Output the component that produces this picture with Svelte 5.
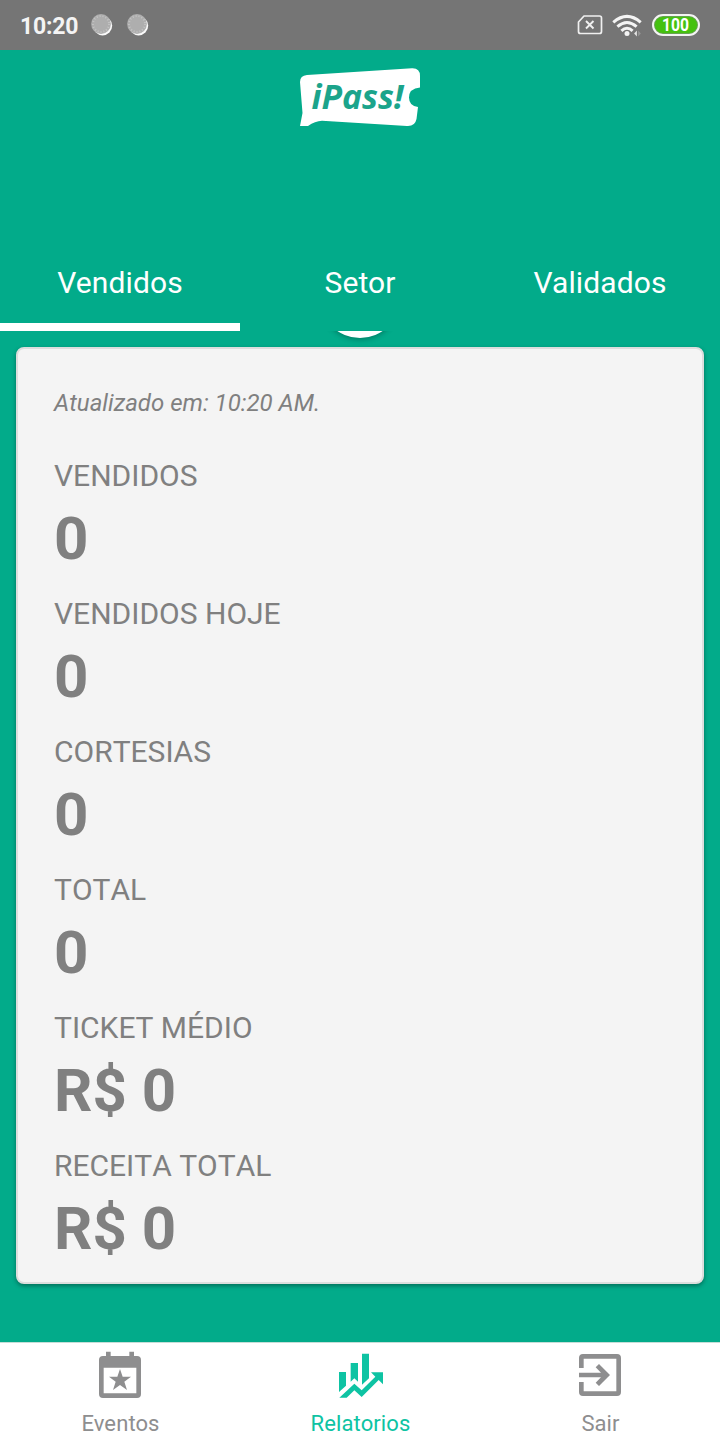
<script>
  const tabs = ['Vendidos', 'Setor', 'Validados'];
  let activeTab = 'Vendidos';

  const updatedAt = '10:20 AM';
  const stats = [
    { label: 'VENDIDOS', value: '0' },
    { label: 'VENDIDOS HOJE', value: '0' },
    { label: 'CORTESIAS', value: '0' },
    { label: 'TOTAL', value: '0' },
    { label: 'TICKET MÉDIO', value: 'R$ 0' },
    { label: 'RECEITA TOTAL', value: 'R$ 0' }
  ];

  const pages = [
    {
      name: 'Eventos',
      icon: 'M138 50h14v13h56V50h14v13h9q12 0 12 12v102q0 12-12 12H129q-12 0-12-12V75q0-12 12-12h9zM131 98v77h98V98zM180 102l8 23h25l-20 15 8 25-21-15-21 15 8-25-20-15h25z'
    },
    {
      name: 'Relatorios',
      icon: 'M117 111h21v41l-21 19zM152 84h22v56l-11-10-11 10zM186 56h21v74l-21 19zM118 188l45-42 22 20 41-41-13-13h36v36l-13-13-51 51-22-20-23 22z'
    },
    {
      name: 'Sair',
      icon: 'M167 97l10-10 33 33-33 33-10-10 16-16h-66v-14h66zM129 57h102q12 0 12 12v102q0 12-12 12H129q-12 0-12-12v-30h14v28h98V71h-98v28h-14V69q0-12 12-12z'
    }
  ];
  let activePage = 'Relatorios';
</script>

<div class="screen">
  <div class="status-bar">
    <span class="clock">10:20</span>
    {#each [1, 2] as n}
      <svg class="coin" width="24" height="24" viewBox="0 0 24 24">
        <circle cx="12.6" cy="12.8" r="9.6" fill="#fafafa" />
        <circle cx="11" cy="11" r="9.9" fill="#aeaeae" />
        <circle cx="11" cy="11" r="8" fill="none" stroke="#c4c4c4" stroke-width="2" stroke-dasharray="1 2" />
      </svg>
    {/each}
    <div class="system">
      <svg width="26" height="22" viewBox="0 0 26 22" fill="none" stroke="#f0f0f0">
        <path d="M7 2H22.5Q24.5 2 24.5 4V17.5Q24.5 19.5 22.5 19.5H3.5Q1.5 19.5 1.5 17.5V8Z" stroke-width="1.7" stroke-linejoin="round" />
        <path d="M9 7l7.5 7.5M16.5 7L9 14.5" stroke-width="1.9" />
      </svg>
      <svg class="wifi" width="30" height="24" viewBox="0 0 30 24" fill="none" stroke="#f4f4f4" stroke-width="3">
        <path d="M1.3 8.3Q15 -3.6 28.7 8.3" />
        <path d="M5.4 12.6Q15 4.4 24.6 12.6" />
        <path d="M9.4 16.8Q15 11.6 20.6 16.8" />
        <circle cx="15" cy="19.4" r="2.5" fill="#f4f4f4" stroke="none" />
        <path d="M24.9 16.5v6l-2.8-3z" fill="#e5e5e5" stroke="none" />
        <path d="M26.2 16.5v6l2.6-3z" fill="#969696" stroke="none" />
      </svg>
      <svg class="battery" width="48" height="22" viewBox="0 0 48 22">
        <rect x="1" y="1" width="46" height="20" rx="10" fill="#68a252" stroke="#f4f4f4" stroke-width="2" />
        <rect x="3" y="3" width="42" height="16" rx="8" fill="#45c110" />
        <text x="10" y="17.2" textLength="27" lengthAdjust="spacingAndGlyphs">100</text>
      </svg>
    </div>
  </div>

  <header>
    <svg class="logo" width="120" height="60" viewBox="0 0 120 60">
      <path
        fill="#fff"
        d="M7 7L112 .3Q120 0 120 8V19.500Q109 20.500 109 29.500Q109 38 118 39L116.500 51Q115 58.500 107 58L22 52.800Q15 53 8 58H0L2.500 45L0 14Q0 7.500 7 7Z"
      />
      <text x="11.500" y="40.500" textLength="92" lengthAdjust="spacingAndGlyphs">iPass!</text>
    </svg>
  </header>

  <nav class="tabs">
    {#each tabs as tab}
      <button class="tab" class:active={tab === activeTab} on:click={() => (activeTab = tab)}>{tab}</button>
    {/each}
  </nav>

  <main>
    <div class="refresh"><div class="spinner"></div></div>
    <section class="card">
      <p class="updated">Atualizado em: {updatedAt}.</p>
      {#each stats as stat}
        <div class="stat">
          <div class="label">{stat.label}</div>
          <div class="value">{stat.value}</div>
        </div>
      {/each}
    </section>
  </main>

  <nav class="bottom-nav">
    {#each pages as page}
      <button class="page" class:active={page.name === activePage} on:click={() => (activePage = page.name)}>
        <svg width="56" height="56" viewBox="96 36 168 168">
          <path d={page.icon} fill="currentColor" fill-rule="evenodd" />
        </svg>
        <span>{page.name}</span>
      </button>
    {/each}
  </nav>
</div>

<style>
  :global(body) {
    margin: 0;
  }

  .screen {
    display: flex;
    flex-direction: column;
    width: 720px;
    height: 1440px;
    overflow: hidden;
    background: #02ab8a;
    font-family: Roboto, sans-serif;
  }

  button {
    margin: 0;
    padding: 0;
    border: 0;
    background: none;
    font-family: inherit;
  }

  .status-bar {
    display: flex;
    align-items: center;
    box-sizing: border-box;
    height: 50px;
    padding: 0 20px;
    background: #757575;
    color: #f4f4f4;
  }

  .clock {
    width: 58px;
    margin-right: 12px;
    padding-top: 3px;
    font-size: 23px;
    font-weight: 700;
    line-height: 26px;
    letter-spacing: -0.2px;
  }

  .coin {
    margin-right: 12px;
  }

  .system {
    display: flex;
    align-items: center;
    margin-left: auto;
  }

  .wifi {
    margin: 2px 10px 0 9px;
  }

  .battery text {
    fill: #fff;
    font-size: 18px;
    font-weight: 700;
  }

  header {
    display: flex;
    justify-content: center;
    box-sizing: border-box;
    height: 185px;
    padding-top: 18px;
  }

  .logo text {
    fill: #1ba48b;
    font-family: 'Open Sans', sans-serif;
    font-size: 34px;
    font-style: italic;
    font-weight: 700;
  }

  .tabs {
    display: flex;
    height: 96px;
  }

  .tab {
    flex: 1;
    box-sizing: border-box;
    padding-top: 6px;
    border-bottom: 8px solid transparent;
    color: #fff;
    font-size: 30px;
    letter-spacing: 0.1px;
  }

  .tab.active {
    border-bottom-color: #fff;
  }

  main {
    position: relative;
    flex: 1;
    padding: 16px 16px 0;
  }

  .refresh {
    position: absolute;
    top: 0;
    left: 310px;
    width: 100px;
    height: 16px;
    overflow: hidden;
  }

  .spinner {
    width: 80px;
    height: 80px;
    margin: -73px auto 0;
    border-radius: 50%;
    background: #fff;
    box-shadow: 0 2px 5px rgba(0, 0, 0, 0.25);
  }

  .card {
    box-sizing: border-box;
    height: 937px;
    padding: 34px 36px 0;
    border: 2px solid #dcdedd;
    border-radius: 8px;
    background: #f4f4f4;
    box-shadow: 0 2px 4px rgba(0, 0, 0, 0.35);
    color: #808080;
    font-kerning: none;
  }

  .updated {
    margin: 0 0 33px;
    font-size: 24px;
    font-style: italic;
    line-height: 40px;
  }

  .stat {
    margin-bottom: 12px;
  }

  .label {
    font-size: 30px;
    line-height: 40px;
  }

  .value {
    font-size: 60px;
    font-weight: 700;
    line-height: 86px;
  }

  .bottom-nav {
    display: flex;
    box-sizing: border-box;
    height: 98px;
    border-top: 1px solid #c5ddd7;
    background: #fff;
  }

  .page {
    display: flex;
    flex: 1;
    flex-direction: column;
    align-items: center;
    padding-top: 4px;
    color: #8e8e8f;
  }

  .page.active {
    color: #0ec3a3;
  }

  .page span {
    margin: 8px 0 0 1px;
    font-size: 22px;
    line-height: 26px;
    letter-spacing: 0.1px;
  }
</style>
